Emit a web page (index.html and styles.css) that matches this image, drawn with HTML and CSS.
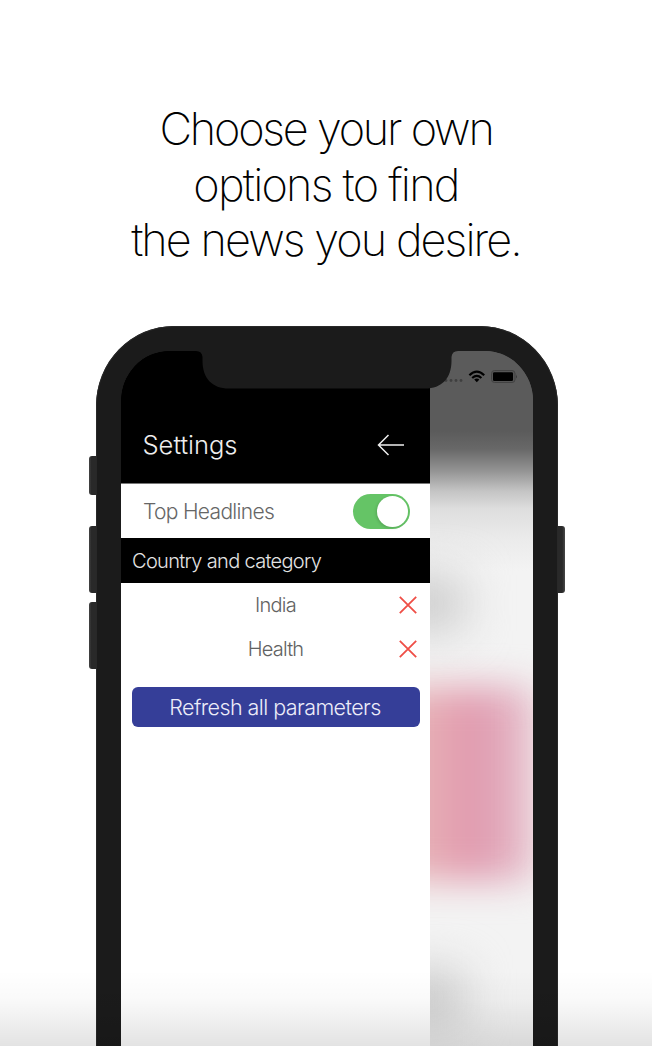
FILE: index.html
```html
<!DOCTYPE html>
<html lang="en">
<head>
<meta charset="utf-8">
<title>Settings</title>
<link rel="stylesheet" href="styles.css">
</head>
<body>
<main class="stage">
  <h1 class="headline">
    <span class="line line-one">Choose your own</span>
    <span class="line line-two">options to find</span>
    <span class="line line-three">the news you desire.</span>
  </h1>
  <div class="phone">
    <i class="key key-mute"></i><i class="key key-up"></i><i class="key key-down"></i><i class="key key-power"></i>
    <div class="screen">
      <section class="drawer">
        <header class="bar">
          <h2 class="title">Settings</h2>
          <svg class="back" width="28" height="24" viewBox="0 0 28 24" fill="none" stroke="#eee" stroke-width="1.5"><path d="M27 12H2M11.5 2L1.5 12l10 10"/></svg>
        </header>
        <div class="toggle-row"><span class="toggle-label">Top Headlines</span><span class="switch"><i class="knob"></i></span></div>
        <h3 class="section">Country and category</h3>
        <div class="option"><span class="india">India</span><svg class="remove" width="18" height="18" viewBox="0 0 18 18"><path d="M.8.8l16.400 16.400M17.200.8L.8 17.200"/></svg></div>
        <div class="option"><span class="health">Health</span><svg class="remove" width="18" height="18" viewBox="0 0 18 18"><path d="M.8.8l16.400 16.400M17.200.8L.8 17.200"/></svg></div>
        <button class="refresh">Refresh all parameters</button>
      </section>
      <aside class="backdrop">
        <i class="blur pink"></i><i class="blur gray gray-one"></i><i class="blur gray gray-two"></i>
      </aside>
      <svg class="status" width="100" height="20" viewBox="440 366 100 20">
        <g fill="#3f3f3f"><circle cx="446" cy="380.500" r="1.400"/><circle cx="451" cy="380.500" r="1.400"/><circle cx="456" cy="380.500" r="1.400"/><circle cx="461" cy="380.500" r="1.400"/></g>
        <g fill="none" stroke="#000" stroke-width="2.200"><path d="M469.400 375.300Q476.800 367.800 484.200 375.300"/><path d="M472.200 378Q476.800 373.800 481.400 378"/></g>
        <path d="M474.200 379.600Q476.800 377.400 479.400 379.600L476.800 382.200Z"/>
        <rect x="491.500" y="370.500" width="23.500" height="12" rx="3" fill="#555" stroke="#424242"/>
        <rect x="493" y="372.200" width="20" height="8.800" rx="1.300"/>
        <path d="M516 374.500q1.500 2 0 4z" fill="#333"/>
      </svg>
      <svg class="notch" width="264" height="39" viewBox="195 350 264 39"><path fill="#1b1b1b" d="M195 350V351H196Q202 351 202.500 357V361C202.500 378 212 388.600 229 388.600H425C442 388.600 451.500 378 451.500 361V357Q452 351 458 351H459V350Z"/></svg>
    </div>
  </div>
</main>
</body>
</html>
```
FILE: styles.css
```css
* { box-sizing: border-box; }
body { margin: 0; background: #fff; font-family: Inter, "Liberation Sans", sans-serif; }
.stage { position: relative; width: 652px; height: 1046px; overflow: hidden; display: flex; flex-direction: column; }
.stage::after { content: ""; position: absolute; left: 0; right: 0; bottom: 0; height: 76px; background: linear-gradient(transparent, rgba(0,0,0,.025) 40%, rgba(0,0,0,.11)); }
.headline { margin: 0; padding-top: 101px; height: 326px; flex: none; font-size: 45px; font-weight: 200; line-height: 55.5px; color: #000; display: flex; flex-direction: column; align-items: center; }
.line { white-space: nowrap; }
.line-one { letter-spacing: -2.2px; }
.line-two { letter-spacing: -1.75px; }
.line-three { letter-spacing: -1.92px; }
.phone { position: relative; flex: none; width: 462px; height: 760px; margin-left: 96px; padding: 25px 25px 0 25px; background: #1b1b1b; border-radius: 78px 78px 0 0 / 80px 80px 0 0; box-shadow: inset 0 0 0 1px #282828; }
.key { position: absolute; left: -7px; width: 7px; background: linear-gradient(90deg, #444, #292929 35%); border-radius: 3px 0 0 3px; }
.key-mute { top: 130px; height: 39px; }
.key-up { top: 200px; height: 67px; }
.key-down { top: 276px; height: 67px; }
.key-power { left: auto; right: -7px; top: 200px; height: 67px; border-radius: 0 3px 3px 0; background: linear-gradient(90deg, #292929 60%, #484848); }
.screen { position: relative; display: grid; grid-template-columns: 309px 1fr; height: 735px; border-radius: 48px 48px 0 0 / 50px 50px 0 0; overflow: hidden; background: #5b5b5b; }
.drawer { background: linear-gradient(#000 100px, #fff 100px); }
.bar { height: 132px; padding: 80px 25px 0 22px; display: flex; justify-content: space-between; align-items: flex-start; background: #000; }
.title { margin: -2px 0 0 -.5px; font-size: 25.5px; line-height: 32px; font-weight: 300; letter-spacing: 0; color: #eee; }
.back { margin-top: 2px; }
.toggle-row { height: 55px; padding: 0 20px 0 22px; display: flex; align-items: center; justify-content: space-between; border-top: 1px solid #777; }
.toggle-label { font-size: 21px; font-weight: 300; letter-spacing: -.68px; color: #666; }
.switch { width: 57px; height: 35px; padding: 2px; display: flex; justify-content: flex-end; border-radius: 18px; background: #65c466; }
.knob { width: 31px; height: 31px; border-radius: 50%; background: #fff; box-shadow: -1px 1px 3px rgba(0,0,0,.15); }
.section { margin: 0; height: 44.5px; padding-left: 11px; font-size: 20px; line-height: 46px; font-weight: 300; letter-spacing: -.68px; color: #e4e4e4; background: #000; }
.option { height: 44px; padding-right: 13px; display: grid; grid-template-columns: 31px 1fr 18px; align-items: center; text-align: center; font-size: 20px; font-weight: 300; color: #626262; }
.option span { grid-column: 2; }
.india { letter-spacing: -.7px; }
.health { letter-spacing: -.8px; }
.remove { fill: none; stroke: #ef4e46; stroke-width: 1.8; }
.refresh { display: block; width: 288px; height: 40px; margin: 16px 0 0 10.5px; padding: 0 1px 0 0; border: 0; border-radius: 6px; background: #353e98; color: #ececf8; font: 300 21.5px/40px Inter, "Liberation Sans", sans-serif; letter-spacing: -.57px; }
.backdrop { position: relative; overflow: hidden; background: linear-gradient(#5b5b5b 0, #5b5b5b 80px, #686868 98px, #949494 120px, #c4c4c4 140px, #dedede 158px, #ebebeb 188px, #f3f3f3 220px); }
.blur { position: absolute; filter: blur(18px); }
.pink { left: -40px; top: 336px; width: 145px; height: 194px; background: linear-gradient(90deg, #e6b0b6 28%, #e298ad 52%, #dfa3b6 72%, #e6bac8 90%); }
.gray { left: -55px; width: 90px; height: 56px; background: #cecece; filter: blur(22px); }
.gray-one { top: 224px; }
.gray-two { top: 618px; }
.status { position: absolute; left: 319px; top: 15px; }
.notch { position: absolute; left: 74px; top: -1px; }
```
